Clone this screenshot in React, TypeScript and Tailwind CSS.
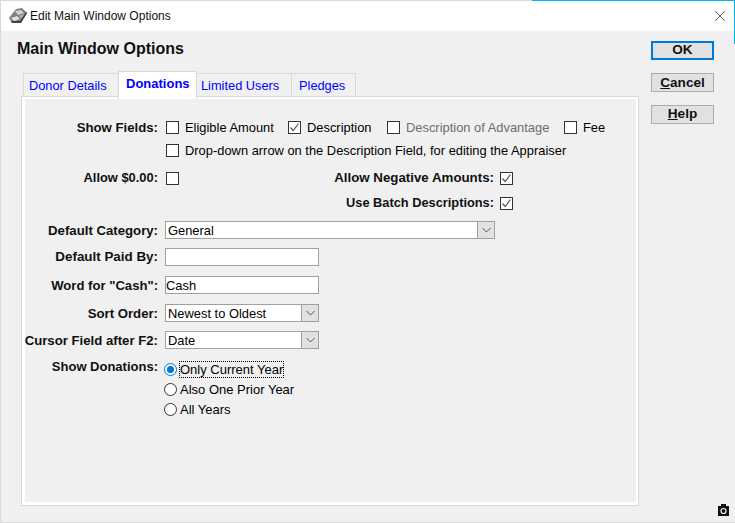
import React from 'react';
import { X } from 'lucide-react';

const font = "font-['Liberation_Sans',Arial,sans-serif]";

const Check = ({ checked = false }: { checked?: boolean }) => (
    <span className="flex h-[13px] w-[13px] shrink-0 items-center justify-center border border-[#333333] bg-white">
        {checked && (
            <svg width="11" height="11" viewBox="0 0 11 11" fill="none">
                <path d="M1.5 5.5 L4.2 8.5 L9.5 1.5" stroke="#555555" strokeWidth="1.2" />
            </svg>
        )}
    </span>
);

const CheckItem = ({ label, checked, muted, className }: { label: string; checked?: boolean; muted?: boolean; className?: string }) => (
    <div className={`flex items-center gap-[6px] ${className ?? ''}`}>
        <Check checked={checked} />
        <span className={muted ? 'text-[#6d6d6d]' : 'text-black'}>{label}</span>
    </div>
);

const Radio = ({ checked = false }: { checked?: boolean }) => (
    <span className={`flex h-[13px] w-[13px] shrink-0 items-center justify-center rounded-full border bg-white ${checked ? 'border-[#0078d7]' : 'border-[#333333]'}`}>
        {checked && <span className="h-[7px] w-[7px] rounded-full bg-[#0078d7]" />}
    </span>
);

const Label = ({ children, size = 'text-[13.2px]', className }: { children: React.ReactNode; size?: string; className?: string }) => (
    <div className={`flex w-[133px] shrink-0 justify-end whitespace-nowrap text-right font-bold text-[#111111] ${size} ${className ?? ''}`}>{children}</div>
);

const Combo = ({ value, className }: { value: string; className: string }) => (
    <div className={`flex h-[18px] items-stretch border border-[#a0a0a0] bg-white ${className}`}>
        <span className="flex-1 pl-[2px] leading-[18px]">{value}</span>
        <span className="flex w-[17px] items-center justify-center border-l border-[#a0a0a0] bg-[#e1e1e1]">
            <svg width="9" height="6" viewBox="0 0 9 6" fill="none">
                <path d="M0.5 1 L4.5 5 L8.5 1" stroke="#555555" strokeWidth="1" />
            </svg>
        </span>
    </div>
);

const Field = ({ value }: { value?: string }) => (
    <div className="h-[18px] w-[154px] border border-[#a0a0a0] bg-white leading-[18px]">{value}</div>
);

const Tab = ({ label, active, className }: { label: string; active?: boolean; className?: string }) => (
    <div className={`flex items-center border-x border-t border-[#d9d9d9] text-[#0000ff] ${active ? 'z-10 -mb-[2px] h-[28px] bg-white pb-[3px] text-[13px] font-bold' : 'h-[24px] bg-[#f0f0f0] text-[12.8px]'} ${className ?? ''}`}>
        {label}
    </div>
);

const Button = ({ children, primary }: { children: React.ReactNode; primary?: boolean }) => (
    <button className={`flex h-[19px] w-[63px] items-center justify-center bg-[#e1e1e1] font-bold text-[#111111] ${primary ? 'border-2 border-[#0078d7]' : 'border border-[#adadad]'}`}>
        {children}
    </button>
);

export default function App() {
    return (
        <div className={`${font} relative flex h-[523px] w-[735px] flex-col overflow-hidden border-b border-l border-[#d9d9d9] bg-[#f0f0f0] text-[12.9px] text-black`}>
            {/* Title bar */}
            <div className="flex h-[31px] shrink-0 items-center border-t border-[#d9d9d9] bg-white">
                <svg className="ml-[8px]" width="18" height="16" viewBox="0 0 18 16">
                    <path d="M0 10 L7 1 L13 0 L18 5 L12 15 L3 15 Z" fill="#7f7f7f" />
                    <path d="M6 3 L12 2 L15 5 L9 7 Z" fill="#cfcfcf" />
                    <path d="M2 10 L8 8 L11 11 L5 13 Z" fill="#e2e2e2" />
                    <path d="M10 8 L15 6 L14 9 L12 10 Z" fill="#b5b5b5" />
                    <path d="M3 15 L12 15 L18 5 L17 4 L11 13 L2 13 Z" fill="#444444" />
                </svg>
                <span className="ml-[3px] text-[12px] text-[#111111]">Edit Main Window Options</span>
                <X className="ml-auto mr-[6px] h-[18px] w-[18px] text-[#222222]" strokeWidth={1} />
            </div>
            <div className="flex flex-1 pl-[16px] pr-[21px]">
                {/* Left column */}
                <div className="flex w-[621px] flex-col">
                    <h1 className="mt-[9px] h-[18px] text-[16px] font-bold leading-[18px] text-[#111111]">Main Window Options</h1>
                    <div className="ml-[6px] mt-[13px] flex h-[26px] items-end">
                        <Tab label="Donor Details" className="w-[95px] border-r-0 pl-[5px]" />
                        <Tab label="Donations" active className="w-[79px] pl-[7px]" />
                        <Tab label="Limited Users" className="w-[95px] border-l-0 pl-[4px]" />
                        <Tab label="Pledges" className="w-[64px] border-l-0 pl-[7px]" />
                    </div>
                    <div className="ml-[5px] h-[408px] w-[616px] border-2 border-b-[3px] border-l-[3px] border-white bg-[#f0f0f0] pt-[19px] shadow-[0_0_0_1px_#d9d9d9]">
                        <div className="flex flex-col">
                            <div className="flex h-[20px] items-center gap-[8px]">
                                <Label>Show Fields:</Label>
                                <div className="flex items-center">
                                    <CheckItem label="Eligible Amount" className="w-[122px]" />
                                    <CheckItem label="Description" checked className="w-[99px]" />
                                    <CheckItem label="Description of Advantage" muted className="w-[177px]" />
                                    <CheckItem label="Fee" />
                                </div>
                            </div>
                            <div className="mt-[3px] flex h-[20px] items-center gap-[8px]">
                                <div className="w-[133px]" />
                                <CheckItem label="Drop-down arrow on the Description Field, for editing the Appraiser" />
                            </div>
                            <div className="mt-[7px] flex h-[20px] items-center gap-[8px]">
                                <Label size="text-[12.9px]">Allow $0.00:</Label>
                                <Check />
                                <div className="ml-auto mr-[123px] flex items-center gap-[6px]">
                                    <span className="text-[13.3px] font-bold text-[#111111]">Allow Negative Amounts:</span>
                                    <Check checked />
                                </div>
                            </div>
                            <div className="mt-[5px] flex h-[20px] items-center justify-end gap-[6px] pr-[123px]">
                                <span className="text-[12.8px] font-bold text-[#111111]">Use Batch Descriptions:</span>
                                <Check checked />
                            </div>
                            <div className="mt-[8px] flex h-[18px] items-center gap-[7px]">
                                <Label className="pt-[1px]">Default Category:</Label>
                                <Combo value="General" className="w-[330px]" />
                            </div>
                            <div className="mt-[9px] flex h-[18px] items-center gap-[7px]">
                                <Label size="text-[13.4px]" className="pt-[1px]">Default Paid By:</Label>
                                <Field />
                            </div>
                            <div className="mt-[10px] flex h-[18px] items-center gap-[7px]">
                                <Label size="text-[13.1px]" className="pt-[1px]">Word for "Cash":</Label>
                                <Field value="Cash" />
                            </div>
                            <div className="mt-[10px] flex h-[18px] items-center gap-[7px]">
                                <Label className="pt-[1px]">Sort Order:</Label>
                                <Combo value="Newest to Oldest" className="w-[154px]" />
                            </div>
                            <div className="mt-[9px] flex h-[18px] items-center gap-[7px]">
                                <Label className="pt-[1px]">Cursor Field after F2:</Label>
                                <Combo value="Date" className="w-[154px]" />
                            </div>
                            <div className="mt-[9px] flex gap-[6px]">
                                <Label size="text-[13px]" className="-mt-[1px]">Show Donations:</Label>
                                <div className="mt-[1px] flex flex-col text-[13px]">
                                    <div className="flex h-[20px] items-center gap-[2px]">
                                        <Radio checked />
                                        <span className="border border-dotted border-black leading-[15px]">Only Current Year</span>
                                    </div>
                                    <div className="flex h-[20px] items-center gap-[3px]">
                                        <Radio />
                                        <span className="pt-[1px]">Also One Prior Year</span>
                                    </div>
                                    <div className="flex h-[20px] items-center gap-[3px]">
                                        <Radio />
                                        <span className="pt-[1px]">All Years</span>
                                    </div>
                                </div>
                            </div>
                        </div>
                    </div>
                </div>
                {/* Buttons */}
                <div className="ml-[13px] mt-[10px] flex flex-col gap-[13px] text-[13.6px]">
                    <Button primary>OK</Button>
                    <Button><span className="pt-[1px]"><span className="underline">C</span>ancel</span></Button>
                    <Button><span><span className="underline">H</span>elp</span></Button>
                </div>
            </div>
            {/* Edge of the window behind */}
            <div className="absolute right-0 top-0 h-[1px] w-[203px] bg-[#00b4ef]" />
            <div className="absolute right-0 top-0 h-[44px] w-[1px] bg-[#00b4ef]" />
            <svg className="absolute bottom-[6px] right-[6px]" width="11" height="12" viewBox="0 0 11 12">
                <path d="M0 2 H3 V0 H8 V2 H11 V12 H0 Z" fill="#111111" />
                <circle cx="5.5" cy="7" r="2.5" fill="none" stroke="#ffffff" strokeWidth="1.2" />
            </svg>
        </div>
    );
}
